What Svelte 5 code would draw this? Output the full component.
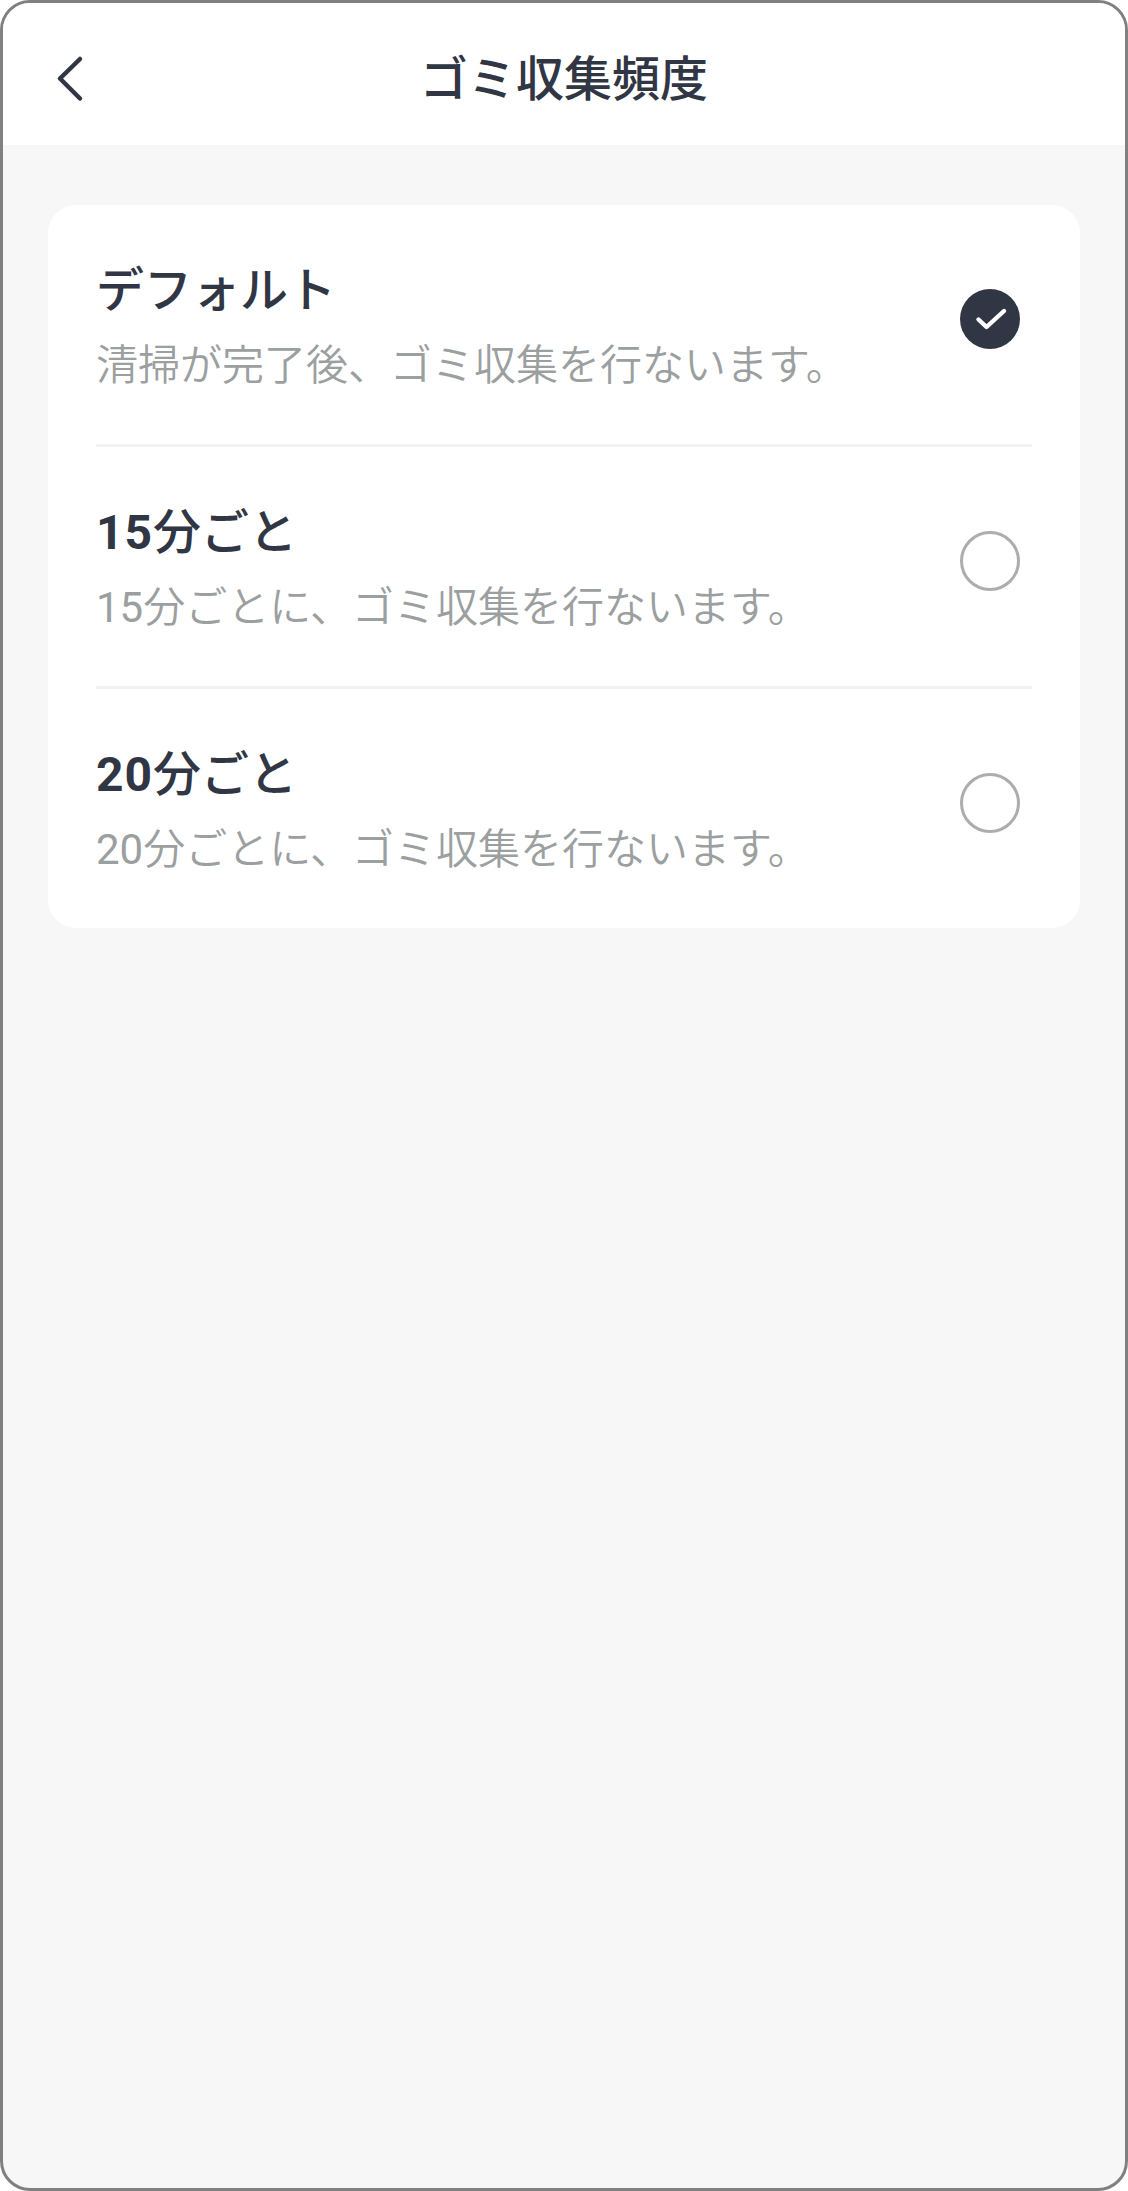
<script>
  const options = [
    { num: "", label: "デフォルト", desc: "清掃が完了後、ゴミ収集を行ないます。", selected: true },
    { num: "15", label: "分ごと", desc: "分ごとに、ゴミ収集を行ないます。", selected: false },
    { num: "20", label: "分ごと", desc: "分ごとに、ゴミ収集を行ないます。", selected: false }
  ];
</script>

<div class="phone">
  <header>
    <button class="back" aria-label="戻る">
      <svg width="36" height="48" viewBox="0 0 36 48" fill="none">
        <path d="M31 4 L11 23.5 L31 43.5" stroke="#303643" stroke-width="4.5" stroke-linecap="round" stroke-linejoin="round" />
      </svg>
    </button>
    <h1>ゴミ収集頻度</h1>
  </header>

  <main>
    <ul class="card">
      {#each options as opt}
        <li>
          <div class="text">
            <div class="title">{#if opt.num}<b>{opt.num}</b>{/if}{opt.label}</div>
            <div class="desc">{#if opt.num}<span>{opt.num}</span>{/if}{opt.desc}</div>
          </div>
          {#if opt.selected}
            <span class="radio on">
              <svg width="60" height="60" viewBox="0 0 60 60" fill="none">
                <path d="M18.5 30.5 L26.5 38 L44 22" stroke="#fff" stroke-width="4.4" stroke-linecap="round" stroke-linejoin="round" />
              </svg>
            </span>
          {:else}
            <span class="radio"></span>
          {/if}
        </li>
      {/each}
    </ul>
  </main>
</div>

<style>
  :global(body) {
    margin: 0;
    background: #fff;
  }

  .phone {
    box-sizing: border-box;
    height: 2191px;
    border: 3px solid #808080;
    border-radius: 30px;
    background: #f7f7f7;
    overflow: hidden;
    display: flex;
    flex-direction: column;
    font-family: Roboto, "Noto Sans CJK JP", sans-serif;
  }

  header {
    position: relative;
    flex: none;
    height: 142px;
    background: #fff;
    display: flex;
    align-items: center;
    justify-content: center;
  }

  .back {
    position: absolute;
    left: 46px;
    top: 52px;
    padding: 0;
    border: 0;
    background: none;
    line-height: 0;
  }

  h1 {
    margin: 11px 0 0;
    font-size: 48px;
    font-weight: 500;
    line-height: 60px;
    color: #303643;
  }

  main {
    padding: 60px 45px 0;
  }

  .card {
    list-style: none;
    margin: 0;
    padding: 0 48px;
    background: #fff;
    border-radius: 28px;
  }

  li {
    box-sizing: border-box;
    height: 242px;
    display: flex;
    align-items: flex-start;
    justify-content: space-between;
    border-bottom: 3px solid #f2f2f2;
    padding: 56px 12px 0 0;
  }

  li:last-child {
    height: 239px;
    border-bottom: 0;
  }

  .title {
    font-size: 48px;
    font-weight: 500;
    line-height: 60px;
    color: #303643;
  }

  .title b {
    font-weight: 700;
    letter-spacing: 1px;
  }

  .desc {
    margin-top: 17px;
    font-size: 42px;
    font-weight: 350;
    line-height: 56px;
    color: #9c9f9f;
  }

  .desc span {
    font-weight: 400;
  }

  .radio {
    flex: none;
    box-sizing: border-box;
    width: 60px;
    height: 60px;
    margin-top: 28px;
    border: 3px solid #adadad;
    border-radius: 50%;
  }

  .radio.on {
    border: 0;
    background: #303643;
    line-height: 0;
  }
</style>
